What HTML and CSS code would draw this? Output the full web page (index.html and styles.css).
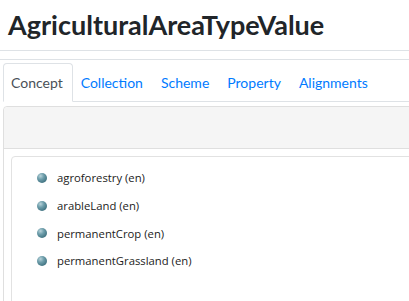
FILE: index.html
```html
<!DOCTYPE html>
<html lang="en">
<head>
  <meta charset="UTF-8" />
  <meta name="viewport" content="width=device-width, initial-scale=1.0" />
  <link rel="stylesheet" href="styles.css">
</head>
<body>
  <div class="page">
    <h1 class="title">AgriculturalAreaTypeValue</h1>
    <div class="section">
      <ul class="tabs">
        <li class="tab active">Concept</li>
        <li class="tab">Collection</li>
        <li class="tab">Scheme</li>
        <li class="tab">Property</li>
        <li class="tab">Alignments</li>
      </ul>
      <div class="card">
        <div class="card-header"></div>
        <div class="card-body">
          <div class="inner">
            <ul class="concepts">
              <li><span class="ball"></span>agroforestry (en)</li>
              <li><span class="ball"></span>arableLand (en)</li>
              <li><span class="ball"></span>permanentCrop (en)</li>
              <li><span class="ball"></span>permanentGrassland (en)</li>
            </ul>
          </div>
        </div>
      </div>
    </div>
  </div>
</body>
</html>
```

FILE: styles.css
```css
html, body {
  margin: 0;
  padding: 0;
  overflow: hidden;
  background: #fff;
}
body {
  font-family: "Open Sans", "Noto Sans", sans-serif;
  color: #212529;
}
.page {
  width: 480px;
}
.title {
  margin: 0;
  padding: 8px 8px 0;
  height: 51px;
  box-sizing: border-box;
  font-family: Lato, "Open Sans", sans-serif;
  font-size: 27px;
  font-weight: 700;
  line-height: 34px;
  border-bottom: 1px solid #dee2e6;
}
.section {
  margin-top: 8px;
  border-top: 1px solid #dee2e6;
  padding: 3px 0 0 3px;
}
.tabs {
  display: flex;
  list-style: none;
  margin: 0;
  padding: 0;
  border-bottom: 1px solid #dee2e6;
  font-family: Lato, "Open Sans", sans-serif;
}
.tab {
  height: 37px;
  padding: 0 9px 0 7px;
  border: 1px solid transparent;
  border-bottom: none;
  border-radius: 4px 4px 0 0;
  margin-bottom: -1px;
  font-size: 14px;
  line-height: 38px;
  color: #007bff;
}
.tab.active {
  color: #495057;
  background: #fff;
  border-color: #dee2e6;
  border-bottom: 1px solid #fff;
}
.card {
  margin-top: 4px;
  border: 1px solid #dfdfdf;
  border-radius: 4px;
}
.card-header {
  height: 41px;
  background: #f5f5f5;
  border-bottom: 1px solid #dfdfdf;
  border-radius: 4px 4px 0 0;
}
.card-body {
  padding: 7px 0 0 7px;
}
.inner {
  border: 1px solid #e2e2e2;
  border-radius: 4px;
  height: 160px;
}
.concepts {
  list-style: none;
  margin: 0;
  padding: 7px 0 0 25px;
}
.concepts li {
  display: flex;
  align-items: center;
  height: 27.7px;
  font-size: 11.3px;
  color: #222;
}
.ball {
  width: 10px;
  height: 10px;
  border-radius: 50%;
  margin-right: 10px;
  background: radial-gradient(circle at 35% 30%, #b9d3da 0, #6e9eab 35%, #3c6f7d 80%, #2c5966 100%);
}
```
